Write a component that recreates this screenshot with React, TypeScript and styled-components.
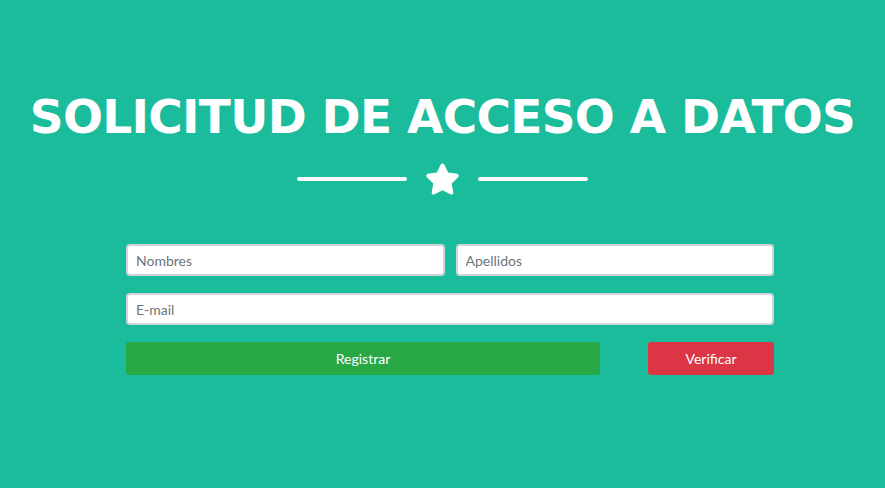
import React from "react";
import styled, { createGlobalStyle } from "styled-components";

const Global = createGlobalStyle`
  html, body { margin: 0; padding: 0; background: #1abc9c; }
  body { font-family: "Lato", "Liberation Sans", sans-serif; }
  * { box-sizing: border-box; }
`;

const Page = styled.main`
  width: 885px;
  height: 488px;
  background: #1abc9c;
  display: flex;
  flex-direction: column;
  align-items: center;
  padding-top: 88px;
`;

const Title = styled.h1`
  margin: 0;
  font-family: "DejaVu Sans", "Liberation Sans", sans-serif;
  font-weight: 700;
  font-size: 47px;
  line-height: 58px;
  color: #ffffff;
  text-transform: uppercase;
  letter-spacing: -0.7px;
  white-space: nowrap;
`;

const Divider = styled.div`
  display: flex;
  align-items: center;
  gap: 18px;
  margin-top: 16px;
  height: 34px;
`;

const Line = styled.span`
  display: block;
  width: 110px;
  height: 4px;
  border-radius: 2px;
  background: #ffffff;
`;

const Form = styled.form`
  width: 648px;
  margin-top: 48px;
  margin-left: 15px;
  display: flex;
  flex-direction: column;
  gap: 17px;
`;

const Row = styled.div`
  display: flex;
  gap: 11px;
`;

const Input = styled.input`
  flex: 1;
  min-width: 0;
  height: 32px;
  border: 2px solid #ced4da;
  border-radius: 4px;
  padding: 0 8px;
  font-family: "Lato", "Liberation Sans", sans-serif;
  font-size: 14px;
  color: #495057;
  background: #fff;
  &::placeholder { color: #6c757d; }
`;

const ButtonRow = styled.div`
  display: flex;
  justify-content: space-between;
`;

const Button = styled.button<{ $variant: "green" | "red"; $w: number }>`
  width: ${(p) => p.$w}px;
  height: 33px;
  border: none;
  border-radius: 3px;
  background: ${(p) => (p.$variant === "green" ? "#28a745" : "#dc3545")};
  color: #ffffff;
  font-family: "Lato", "Liberation Sans", sans-serif;
  font-size: 14px;
  cursor: pointer;
`;

const Star = () => (
  <svg width="35" height="32" viewBox="0 0 576 512" aria-hidden="true">
    <path
      fill="#ffffff"
      d="M259.3 17.8L194 150.2 47.9 171.5c-26.2 3.8-36.7 36.1-17.7 54.6l105.7 103-25 145.5c-4.5 26.3 23.2 46 46.4 33.7L288 439.6l130.7 68.7c23.2 12.2 50.9-7.4 46.4-33.7l-25-145.5 105.7-103c19-18.5 8.5-50.8-17.7-54.6L382 150.2 316.7 17.8c-11.7-23.6-45.6-23.9-57.4 0z"
    />
  </svg>
);

export default function App() {
  return (
    <>
      <Global />
      <Page>
        <Title>Solicitud de acceso a datos</Title>
        <Divider>
          <Line />
          <Star />
          <Line />
        </Divider>
        <Form onSubmit={(e) => e.preventDefault()}>
          <Row>
            <Input placeholder="Nombres" />
            <Input placeholder="Apellidos" />
          </Row>
          <Row>
            <Input placeholder="E-mail" />
          </Row>
          <ButtonRow>
            <Button $variant="green" $w={474}>Registrar</Button>
            <Button $variant="red" $w={126}>Verificar</Button>
          </ButtonRow>
        </Form>
      </Page>
    </>
  );
}
